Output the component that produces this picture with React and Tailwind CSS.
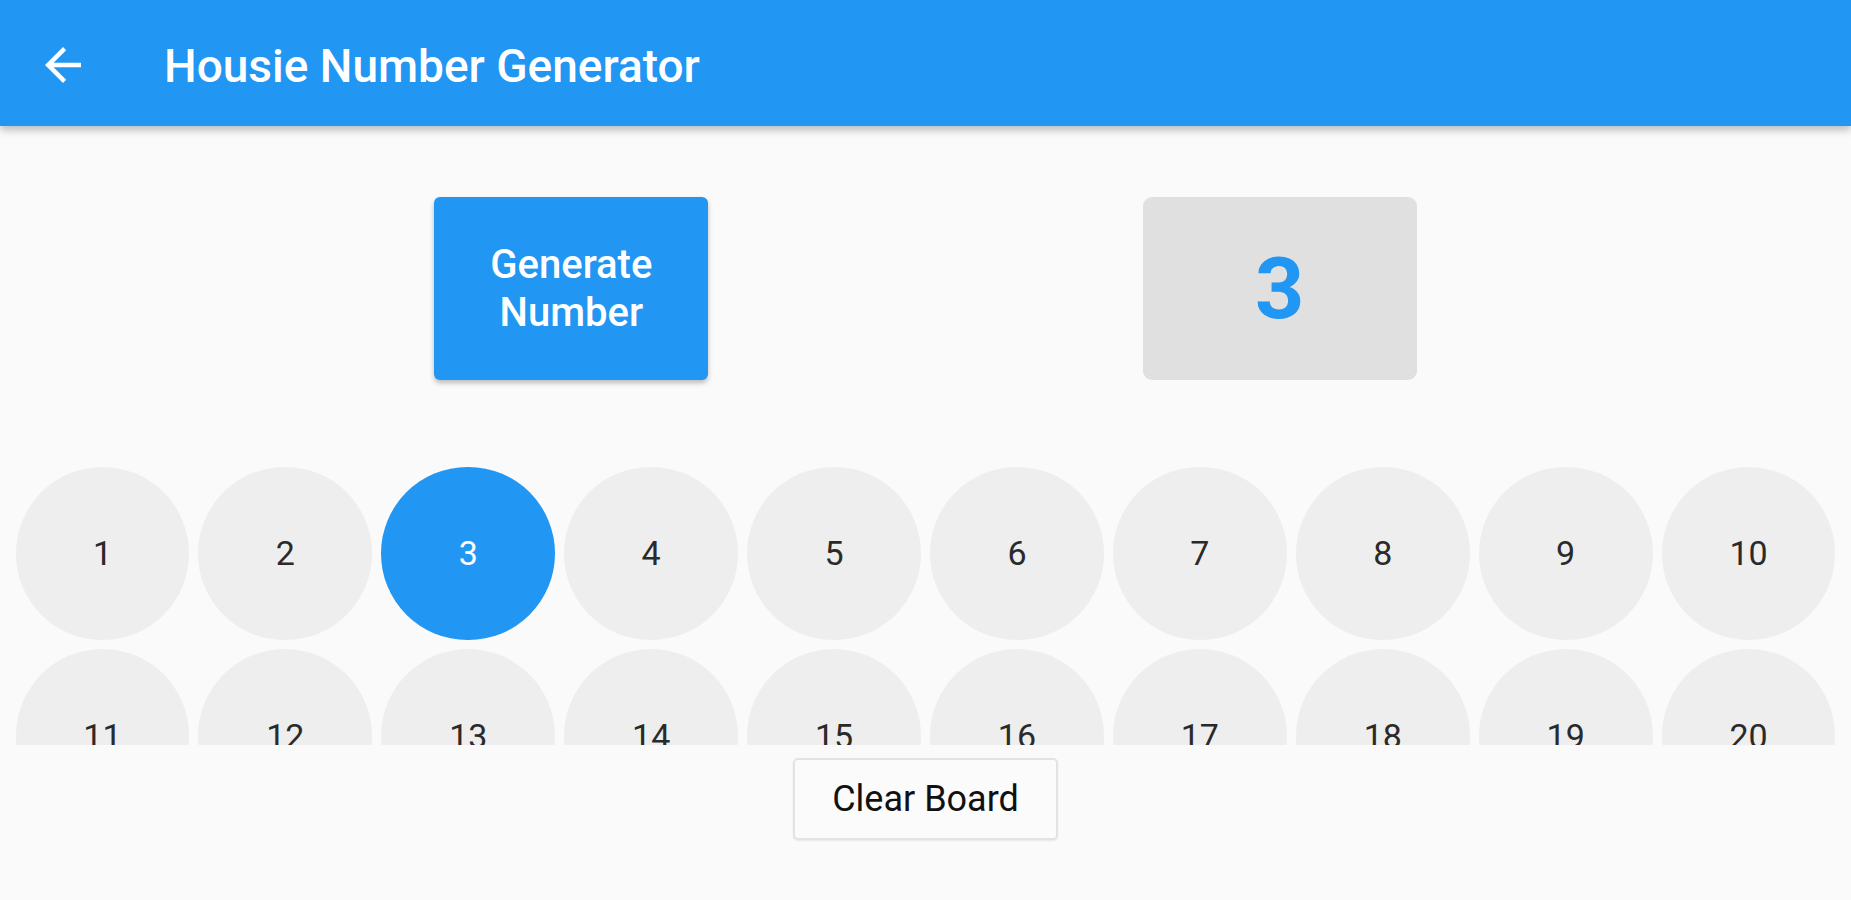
const numbers = Array.from({ length: 20 }, (_, i) => i + 1);
const current = 3;

const BackIcon = () => (
  <svg viewBox="0 0 24 24" className="h-[54px] w-[54px] fill-white">
    <path d="M20 11H7.83l5.59-5.59L12 4l-8 8 8 8 1.41-1.41L7.83 13H20v-2z" />
  </svg>
);

const App = () => {
  return (
    <div className="flex h-[900px] w-full flex-col overflow-hidden bg-[#fafafa] font-['Roboto',sans-serif]">
      <div className="relative z-10 flex h-[126px] shrink-0 items-center bg-[#2196f3] shadow-[0_4px_8px_rgba(0,0,0,0.25)]">
        <div className="ml-[36px] mt-[4px] flex h-[54px] w-[54px] items-center justify-center">
          <BackIcon />
        </div>
        <h1 className="ml-[74px] mt-[6px] text-[46px] font-medium text-white">
          Housie Number Generator
        </h1>
      </div>

      <div className="mt-[71px] flex justify-evenly">
        <button className="flex h-[183px] w-[274px] items-center justify-center rounded-[6px] bg-[#2196f3] text-[40px] leading-[48px] font-medium text-white shadow-[0_3px_5px_rgba(0,0,0,0.25)]">
          Generate
          <br />
          Number
        </button>
        <div className="flex h-[183px] w-[274px] items-center justify-center rounded-[9px] bg-[#e0e0e0] text-[86px] font-bold text-[#2196f3]">
          {current}
        </div>
      </div>

      <div className="mt-[82px] h-[283px] shrink-0 overflow-hidden px-[11px]">
        <div className="grid grid-cols-10">
          {numbers.map((n) => (
            <div key={n} className="aspect-square p-[4.5px]">
              <div
                className={
                  n === current
                    ? "flex h-full w-full items-center justify-center rounded-full bg-[#2196f3] text-[34px] text-white"
                    : "flex h-full w-full items-center justify-center rounded-full bg-[#eeeeee] text-[34px] text-[#2a2a2a]"
                }
              >
                {n}
              </div>
            </div>
          ))}
        </div>
      </div>

      <div className="mt-[13px] flex justify-center">
        <button className="h-[82px] w-[265px] rounded-[5px] border-2 border-[#e3e3e3] bg-[#fbfbfb] text-[36px] text-[#111] shadow-[0_1px_2px_rgba(0,0,0,0.08)]">
          Clear Board
        </button>
      </div>
    </div>
  );
};

export default App;
